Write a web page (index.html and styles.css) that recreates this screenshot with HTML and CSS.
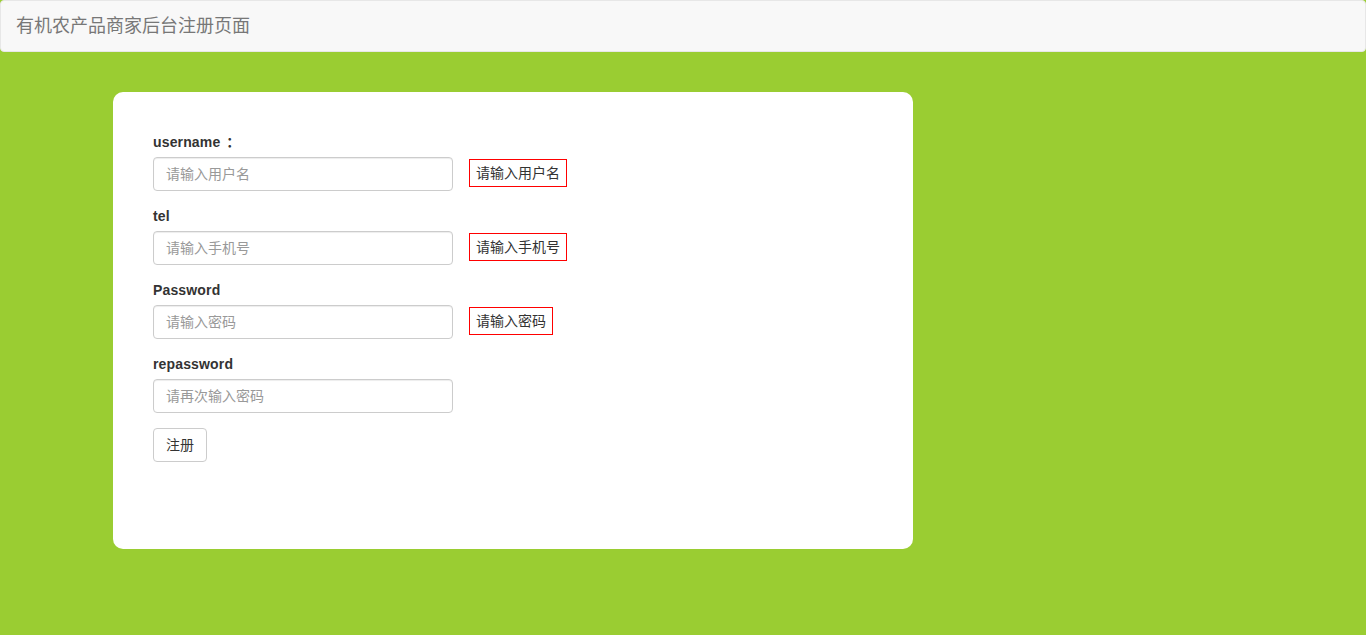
FILE: index.html
```html
<!DOCTYPE html>
<html lang="zh-CN">
<head>
<meta charset="utf-8">
<title>有机农产品商家后台注册页面</title>
<link rel="stylesheet" href="styles.css">
</head>
<body>
<nav class="navbar">
  <span class="brand">有机农产品商家后台注册页面</span>
</nav>
<main class="page">
  <form class="card">
    <div class="form-group">
      <label class="label">username<span class="colon">：</span></label>
      <div class="row">
        <input class="input" type="text" placeholder="请输入用户名">
        <span class="hint">请输入用户名</span>
      </div>
    </div>
    <div class="form-group">
      <label class="label">tel</label>
      <div class="row">
        <input class="input" type="text" placeholder="请输入手机号">
        <span class="hint">请输入手机号</span>
      </div>
    </div>
    <div class="form-group">
      <label class="label">Password</label>
      <div class="row">
        <input class="input" type="password" placeholder="请输入密码">
        <span class="hint">请输入密码</span>
      </div>
    </div>
    <div class="form-group">
      <label class="label">repassword</label>
      <div class="row">
        <input class="input" type="password" placeholder="请再次输入密码">
      </div>
    </div>
    <button class="btn" type="button">注册</button>
  </form>
</main>
</body>
</html>
```
FILE: styles.css
```css
* { box-sizing: border-box; }
html, body {
  margin: 0;
  padding: 0;
}
body {
  background: #9acd32;
  font-family: "Liberation Sans", "Noto Sans CJK SC", sans-serif;
  font-size: 14px;
  line-height: 20px;
  color: #333;
  height: 635px;
}
.navbar {
  height: 52px;
  background: #f8f8f8;
  border: 1px solid #e7e7e7;
  border-radius: 4px;
  display: flex;
  align-items: center;
  padding: 0 15px;
}
.brand {
  font-size: 18px;
  color: #777;
  line-height: 20px;
  margin-top: -1px;
}
.page {
  padding: 40px 0 0 113px;
}
.card {
  width: 800px;
  height: 457px;
  background: #fff;
  border-radius: 10px;
  padding: 40px;
  margin: 0;
}
.form-group {
  margin-bottom: 15px;
}
.label {
  display: block;
  font-weight: bold;
  margin-bottom: 5px;
  height: 20px;
  line-height: 20px;
  letter-spacing: 0.15px;
}
.colon {
  margin-left: 6px;
}
.row {
  display: flex;
  align-items: center;
}
.input {
  width: 300px;
  height: 34px;
  padding: 6px 12px;
  font-family: inherit;
  font-size: 14px;
  color: #555;
  border: 1px solid #ccc;
  border-radius: 4px;
  box-shadow: inset 0 1px 1px rgba(0,0,0,.075);
  outline: none;
}
.input::placeholder { color: #999; }
.hint {
  margin-left: 16px;
  margin-bottom: 2px;
  border: 1px solid #f00;
  padding: 3px 6px;
  line-height: 20px;
  color: #333;
}
.btn {
  height: 34px;
  padding: 6px 12px;
  font-family: inherit;
  font-size: 14px;
  line-height: 20px;
  color: #333;
  background: #fff;
  border: 1px solid #ccc;
  border-radius: 4px;
}
```
